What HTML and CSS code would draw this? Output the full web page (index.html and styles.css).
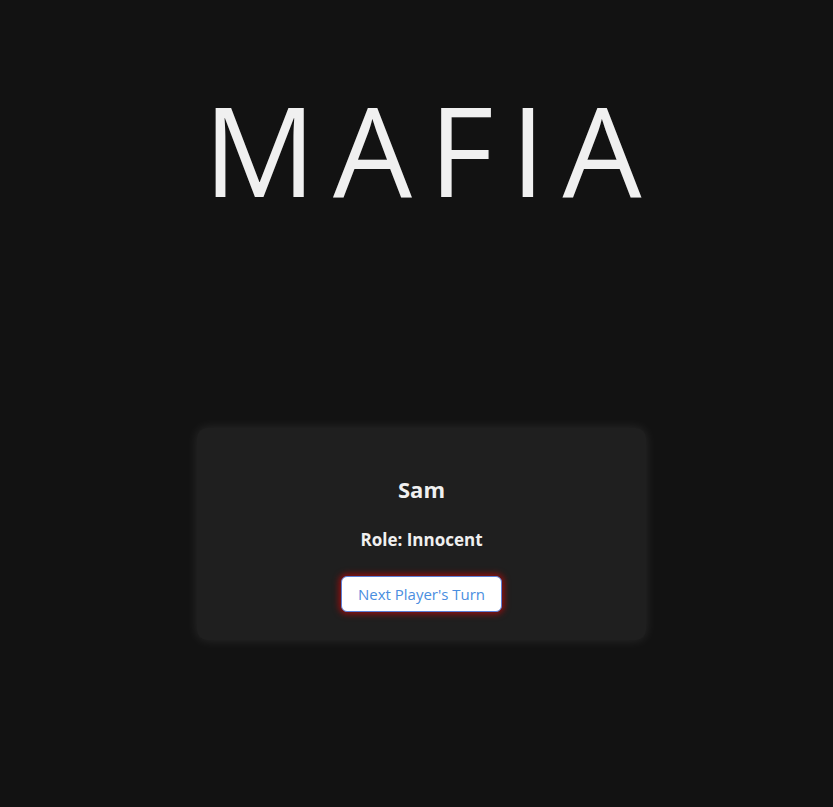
FILE: index.html
```html
<!DOCTYPE html>
<html lang="en">
<head>
<meta charset="utf-8">
<title>Mafia</title>
<link rel="stylesheet" href="styles.css">
</head>
<body>
<main class="page">
  <h1 class="title">MAFIA</h1>
  <section class="card">
    <h2 class="player">Sam</h2>
    <p class="role">Role: Innocent</p>
    <button class="next-btn" type="button">Next Player's Turn</button>
  </section>
</main>
</body>
</html>
```

FILE: styles.css
```css
html, body {
  margin: 0;
  padding: 0;
  background: #121212;
  color: #f0f0f0;
  font-family: "Open Sans", "Noto Sans", sans-serif;
}
.page {
  display: flex;
  flex-direction: column;
  align-items: center;
  padding: 59px 0 0 10px;
  min-height: 807px;
  box-sizing: border-box;
}
.title {
  margin: 0;
  padding-left: 19px;
  font-family: "Open Sans", sans-serif;
  font-weight: 400;
  font-size: 125px;
  line-height: 180px;
  letter-spacing: 17px;
  color: #f0f0f0;
}
.card {
  margin-top: 189px;
  width: 449px;
  height: 212px;
  box-sizing: border-box;
  background: #1f1f1f;
  border-radius: 10px;
  box-shadow: 0 0 12px rgba(255, 255, 255, 0.1);
  display: flex;
  flex-direction: column;
  align-items: center;
  padding-top: 44px;
}
.player {
  margin: 0;
  font-size: 22px;
  font-weight: 700;
  line-height: 34px;
}
.role {
  margin: 22px 0 0;
  font-size: 17px;
  font-weight: 700;
  line-height: 24px;
}
.next-btn {
  margin-top: 24px;
  width: 161px;
  height: 36px;
  background: #ffffff;
  border: 1px solid #5b7fd6;
  border-radius: 6px;
  color: #4a8ee0;
  font-family: "Open Sans", sans-serif;
  font-size: 15px;
  box-shadow: 0 0 6px 2px rgba(170, 10, 10, 0.85);
  padding: 0;
}
```
